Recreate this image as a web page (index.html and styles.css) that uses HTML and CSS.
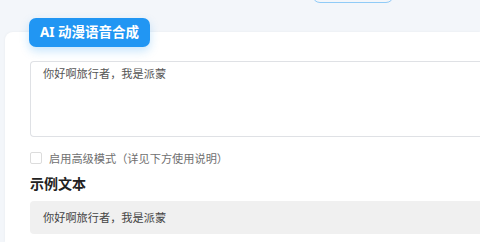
FILE: index.html
```html
<!DOCTYPE html>
<html lang="zh">
<head>
<meta charset="utf-8">
<link rel="stylesheet" href="styles.css">
</head>
<body>
<div class="topbar">
  <div class="topbtn"></div>
</div>
<div class="card">
  <div class="badge">AI 动漫语音合成</div>
  <div class="textarea">你好啊旅行者，我是派蒙</div>
  <label class="check-row">
    <span class="checkbox"></span>
    <span class="check-label">启用高级模式（详见下方使用说明）</span>
  </label>
  <h2 class="section-title">示例文本</h2>
  <div class="example">你好啊旅行者，我是派蒙</div>
</div>
</body>
</html>
```

FILE: styles.css
```css
html, body {
  margin: 0;
  padding: 0;
  overflow: hidden;
}
body {
  background: #f3f6fa;
  font-family: "Noto Sans", "Noto Sans CJK SC", sans-serif;
  width: 480px;
  height: 242px;
}
.topbar {
  display: flex;
  height: 32px;
  padding-left: 312px;
  box-sizing: border-box;
}
.topbtn {
  width: 82px;
  height: 28px;
  margin-top: -25px;
  box-sizing: border-box;
  border: 1.5px solid #90cbf7;
  border-radius: 8px;
  background: #f3f6fa;
}
.card {
  position: relative;
  margin-left: 5px;
  width: 475px;
  height: 210px;
  background: #ffffff;
  border-radius: 8px 0 0 0;
  padding: 29px 0 0 25px;
  box-sizing: border-box;
  box-shadow: 0 0 3px rgba(0, 0, 0, 0.05);
}
.badge {
  position: absolute;
  left: 24px;
  top: -14px;
  height: 29px;
  line-height: 29px;
  padding: 0 11px 0 11px;
  background: #2196f3;
  color: #ffffff;
  font-weight: 700;
  font-size: 13.5px;
  border-radius: 7px;
  box-shadow: 0 4px 10px rgba(33, 150, 243, 0.25);
}
.textarea {
  width: 460px;
  height: 76px;
  box-sizing: border-box;
  border: 1px solid #dfe1e5;
  border-right: none;
  border-radius: 4px 0 0 4px;
  padding: 2px 12px;
  font-size: 11.2px;
  line-height: 20px;
  color: #555555;
}
.check-row {
  display: flex;
  align-items: center;
  height: 14px;
  margin-top: 14px;
}
.checkbox {
  width: 12px;
  height: 12px;
  box-sizing: border-box;
  border: 1px solid #dcdcdc;
  border-radius: 2px;
  background: #fff;
}
.check-label {
  margin-left: 7px;
  font-size: 11.2px;
  color: #707070;
}
.section-title {
  margin: 8px 0 0 0;
  font-size: 14px;
  line-height: 22px;
  font-weight: 700;
  color: #222222;
}
.example {
  margin-top: 6px;
  width: 460px;
  height: 33px;
  line-height: 33px;
  background: #f0f0f0;
  border-radius: 4px 0 0 4px;
  padding-left: 13px;
  font-size: 11.2px;
  color: #444444;
}
```
